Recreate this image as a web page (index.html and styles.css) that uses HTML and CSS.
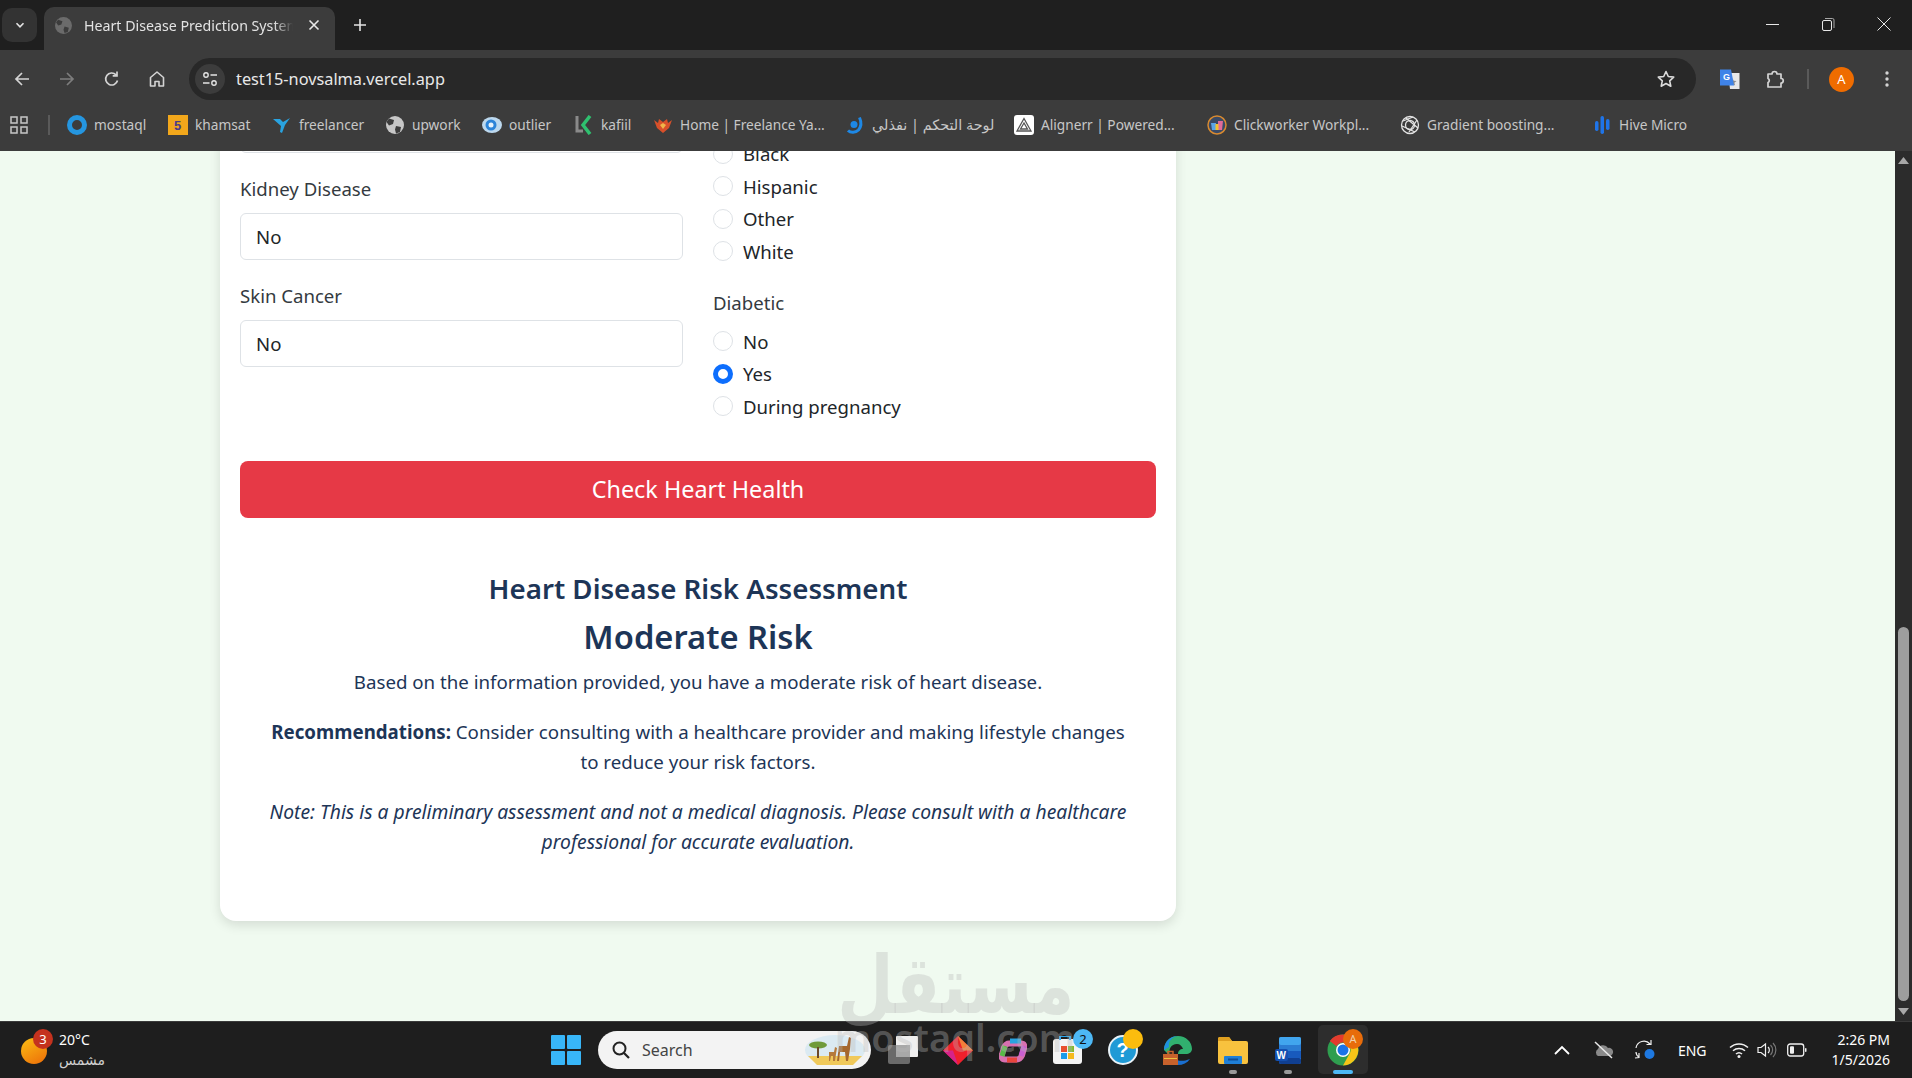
FILE: index.html
```html
<!DOCTYPE html>
<html lang="en">

<head>
    <meta charset="UTF-8">
    <title>Heart Disease Prediction System</title>
    <link rel="stylesheet" href="styles.css">
</head>

<body>
    <div class="screen">

        <!-- browser chrome -->
        <div class="tabstrip">
            <div class="tab-search">
                <svg width="12" height="12" viewBox="0 0 12 12"><path d="M2.5 4.2 6 7.8l3.5-3.6" fill="none" stroke="#e3e3e3" stroke-width="1.6"/></svg>
            </div>
            <div class="tab">
                <svg class="tab-globe" width="17" height="17" viewBox="0 0 16 16"><circle cx="8" cy="8" r="8" fill="#6b6b6b"/><path d="M3 2.5 7 4 6 7 3 8 1 5zM9 9l4 1-1 4-3 1-1-3z" fill="#3c3c3c"/></svg>
                <span class="tab-title">Heart Disease Prediction System</span>
                <svg class="tab-close" width="12" height="12" viewBox="0 0 12 12"><path d="M1.5 1.5l9 9M10.5 1.5l-9 9" stroke="#e8e8e8" stroke-width="1.6"/></svg>
            </div>
            <svg class="tab-new" width="14" height="14" viewBox="0 0 14 14"><path d="M7 1v12M1 7h12" stroke="#e3e3e3" stroke-width="1.6"/></svg>
            <div class="win-buttons">
                <svg width="14" height="14" viewBox="0 0 14 14"><path d="M1 7.5h13" stroke="#e8e8e8" stroke-width="1"/></svg>
                <svg width="14" height="14" viewBox="0 0 14 14"><rect x="1.5" y="3.5" width="9" height="10" rx="1.5" fill="none" stroke="#e8e8e8"/><path d="M4 1.5h7.5a1.5 1.5 0 0 1 1.5 1.5v8" fill="none" stroke="#a8a8a8"/></svg>
                <svg width="14" height="14" viewBox="0 0 14 14"><path d="M.5.5l13 13M13.500.5l-13 13" stroke="#e8e8e8" stroke-width="1"/></svg>
            </div>
        </div>

        <div class="toolbar">
            <svg class="nav-icon" width="18" height="18" viewBox="0 0 18 18"><path d="M16 9H3M9 3 3 9l6 6" fill="none" stroke="#d4d4d4" stroke-width="1.7"/></svg>
            <svg class="nav-icon" width="18" height="18" viewBox="0 0 18 18"><path d="M2 9h13M9 3l6 6-6 6" fill="none" stroke="#7d7d7d" stroke-width="1.7"/></svg>
            <svg class="nav-icon" width="18" height="18" viewBox="0 0 18 18"><path d="M14.5 10.500A6 6 0 1 1 13 4.800M14 1.500v4.300H9.700" fill="none" stroke="#d4d4d4" stroke-width="1.7"/></svg>
            <svg class="nav-icon" width="18" height="18" viewBox="0 0 18 18"><path d="M9 2 2.500 7.500V16H7v-4.500h4V16h4.500V7.500z" fill="none" stroke="#d4d4d4" stroke-width="1.6" stroke-linejoin="round"/></svg>
            <div class="omnibox">
                <div class="site-info">
                    <svg width="16" height="16" viewBox="0 0 16 16"><circle cx="4" cy="4" r="2.200" fill="none" stroke="#e3e3e3" stroke-width="1.4"/><path d="M8.500 4H15M1 12h6.500" stroke="#e3e3e3" stroke-width="1.4"/><circle cx="12" cy="12" r="2.200" fill="none" stroke="#e3e3e3" stroke-width="1.4"/></svg>
                </div>
                <span class="url">test15-novsalma.vercel.app</span>
                <svg class="star" width="20" height="20" viewBox="0 0 20 20"><path d="m10 2.500 2.300 5 5.400.6-4 3.700 1.100 5.400L10 14.500l-4.800 2.700 1.100-5.400-4-3.700 5.400-.6z" fill="none" stroke="#dcdcdc" stroke-width="1.6" stroke-linejoin="round"/></svg>
            </div>
            <svg class="ext-translate" width="22" height="22" viewBox="0 0 22 22"><path d="M9 5h11.500v16H11z" fill="#e8e8e8"/><path d="m13.500 10 1.200 2.700 2.800.2-2.100 1.900.7 2.800-2.600-1.500z" fill="#8b8b8b"/><path d="M1 1.500h11l3 16H1z" fill="#3f83e8"/><text x="4" y="12" class="ext-g">G</text></svg>
            <svg class="ext-puzzle" width="20" height="20" viewBox="0 0 20 20"><path d="M3 5h4a2.500 2.500 0 0 1 5 0h4v4.500a2.200 2.200 0 0 1 0 4.500V18H3v-4.500a2.200 2.200 0 0 0 0-4z" fill="none" stroke="#d4d4d4" stroke-width="1.7" stroke-linejoin="round"/></svg>
            <div class="toolbar-sep"></div>
            <div class="avatar">A</div>
            <svg class="kebab" width="4" height="18" viewBox="0 0 4 18"><circle cx="2" cy="3" r="1.700" fill="#d4d4d4"/><circle cx="2" cy="9" r="1.700" fill="#d4d4d4"/><circle cx="2" cy="15" r="1.700" fill="#d4d4d4"/></svg>
        </div>

        <div class="bookmarks">
            <svg class="apps" width="18" height="18" viewBox="0 0 18 18"><g fill="none" stroke="#c7c7c7" stroke-width="1.5"><rect x="1" y="1" width="6" height="6"/><rect x="11" y="1" width="6" height="6"/><rect x="1" y="11" width="6" height="6"/><rect x="11" y="11" width="6" height="6"/></g></svg>
            <div class="bm-sep"></div>
            <div class="bm bm-mostaql"><svg width="20" height="20" viewBox="0 0 20 20"><circle cx="10" cy="10" r="7.500" fill="none" stroke="#2596e0" stroke-width="5"/></svg><span>mostaql</span></div>
            <div class="bm bm-khamsat"><svg width="20" height="20" viewBox="0 0 20 20"><rect width="20" height="20" fill="#f2a71b"/><text x="6" y="15" class="bm-five">5</text></svg><span>khamsat</span></div>
            <div class="bm bm-freelancer"><svg width="20" height="20" viewBox="0 0 20 20"><path d="M1 4h7l3 3 7-4-5 7-3 8-2-1 1-6z" fill="#29a3e0"/></svg><span>freelancer</span></div>
            <div class="bm bm-upwork"><svg width="20" height="20" viewBox="0 0 20 20"><circle cx="10" cy="10" r="9" fill="#c7c7c7"/><path d="M4 3.500 9 5 8 9 4 10.500 1.500 7zM11 11l5 1-1 5-4 1.500-1-4z" fill="#3c3c3c"/></svg><span>upwork</span></div>
            <div class="bm bm-outlier"><svg width="20" height="20" viewBox="0 0 20 20"><ellipse cx="10" cy="10" rx="10" ry="8" fill="#bcd8ee"/><circle cx="9" cy="10" r="5.500" fill="#2c84d8"/><circle cx="9" cy="10" r="2.500" fill="#e6f2fb"/></svg><span>outlier</span></div>
            <div class="bm bm-kafiil"><svg width="20" height="20" viewBox="0 0 20 20"><path d="M3 1v15h6" fill="none" stroke="#8a8a8a" stroke-width="3"/><path d="M16 1 9 10l7 9" fill="none" stroke="#2fc06f" stroke-width="3.5"/></svg><span>kafiil</span></div>
            <div class="bm bm-home"><svg width="20" height="20" viewBox="0 0 20 20"><path d="M10 18 4 13 1 5l4 3 1-4 4 3 4-3 1 4 4-3-3 8z" fill="#d8502a"/><path d="M10 14 7 10l3-2 3 2z" fill="#f0b64a"/></svg><span>Home | Freelance Ya...</span></div>
            <div class="bm bm-nafthly"><svg width="20" height="20" viewBox="0 0 20 20"><path d="M14.500 2.500c1.800 4 1.800 9-1 12.500-3 3-8 3-10.500.5" fill="none" stroke="#1e88e5" stroke-width="3"/><circle cx="9" cy="9.500" r="3.500" fill="#1e88e5"/></svg><span dir="rtl">لوحة التحكم | نفذلي</span></div>
            <div class="bm bm-alignerr"><svg width="20" height="20" viewBox="0 0 20 20"><rect width="20" height="20" rx="3" fill="#fff"/><path d="M10 3.500 3 16h14zM10 8l-3.500 6h7z" fill="none" stroke="#555" stroke-width="1.3"/></svg><span>Alignerr | Powered...</span></div>
            <div class="bm bm-clickworker"><svg width="20" height="20" viewBox="0 0 20 20"><circle cx="10" cy="10" r="9" fill="#3a4a66" stroke="#d88a30" stroke-width="1.5"/><path d="M4 8h5v7H5z" fill="#5aa5e6"/><path d="M11 6h5l-1 9h-4z" fill="#e06a9a"/><rect x="8.500" y="9" width="3" height="6" fill="#f2c230"/></svg><span>Clickworker Workpl...</span></div>
            <div class="bm bm-gradient"><svg width="20" height="20" viewBox="0 0 20 20"><g fill="none" stroke="#e3e3e3" stroke-width="1.300"><circle cx="10" cy="10" r="8.500"/><circle cx="10" cy="10" r="4.500"/><path d="M3 6l10-4M17 5 9 17M18 13 6 3M2 11l13 6"/></g></svg><span>Gradient boosting...</span></div>
            <div class="bm bm-hive"><svg width="20" height="20" viewBox="0 0 20 20"><g fill="#1f74e8"><rect x="3" y="6" width="3.500" height="10" rx="1.700"/><rect x="8.500" y="1" width="3.500" height="18" rx="1.700"/><rect x="14" y="4" width="3.500" height="11" rx="1.700"/></g></svg><span>Hive Micro</span></div>
        </div>

        <!-- page, scrolled to the result -->
        <div class="viewport">
            <div class="page">
                <div class="card">
                    <div class="form-grid">
                        <div class="col">
                            <div class="field">
                                <div class="select"></div>
                            </div>
                            <div class="field">
                                <label>Kidney Disease</label>
                                <div class="select">No</div>
                            </div>
                            <div class="field">
                                <label>Skin Cancer</label>
                                <div class="select">No</div>
                            </div>
                        </div>
                        <div class="col col-radios">
                            <div class="radio-group">
                                <div class="radio"><i></i><span>Black</span></div>
                                <div class="radio"><i></i><span>Hispanic</span></div>
                                <div class="radio"><i></i><span>Other</span></div>
                                <div class="radio"><i></i><span>White</span></div>
                            </div>
                            <div class="radio-group">
                                <label class="group-label">Diabetic</label>
                                <div class="radio"><i></i><span>No</span></div>
                                <div class="radio"><i class="checked"></i><span>Yes</span></div>
                                <div class="radio"><i></i><span>During pregnancy</span></div>
                            </div>
                        </div>
                    </div>

                    <button class="submit">Check Heart Health</button>

                    <div class="result">
                        <h3>Heart Disease Risk Assessment</h3>
                        <h2>Moderate Risk</h2>
                        <p>Based on the information provided, you have a moderate risk of heart disease.</p>
                        <p><strong>Recommendations:</strong> Consider consulting with a healthcare provider and making lifestyle changes to reduce your risk factors.</p>
                        <p class="note">Note: This is a preliminary assessment and not a medical diagnosis. Please consult with a healthcare professional for accurate evaluation.</p>
                    </div>
                </div>
            </div>
            <div class="scrollbar">
                <svg width="17" height="18" viewBox="0 0 17 18"><path d="M3 13 8.500 6l5.500 7z" fill="#a8a8a8"/></svg>
                <div class="scroll-track"><div class="scroll-thumb"></div></div>
                <svg width="17" height="18" viewBox="0 0 17 18"><path d="M3 5h11l-5.500 7z" fill="#a8a8a8"/></svg>
            </div>
        </div>

        <!-- windows taskbar -->
        <div class="taskbar">
            <div class="weather">
                <div class="sun"><b>3</b></div>
                <div class="weather-text">
                    <span>20°C</span>
                    <span class="weather-sub">مشمس</span>
                </div>
            </div>
            <div class="task-center">
                <svg class="start" width="30" height="30" viewBox="0 0 30 30"><g fill="#38b6f8"><rect x="0" y="0" width="14" height="14" rx="1"/><rect x="16" y="0" width="14" height="14" rx="1"/><rect x="0" y="16" width="14" height="14" rx="1"/><rect x="16" y="16" width="14" height="14" rx="1"/></g></svg>
                <div class="search">
                    <svg width="20" height="20" viewBox="0 0 20 20"><circle cx="8.500" cy="8.500" r="6" fill="none" stroke="#222" stroke-width="2"/><path d="m13 13 5 5" stroke="#222" stroke-width="2.200"/></svg>
                    <span>Search</span>
                    <svg class="search-art" width="60" height="30" viewBox="0 0 60 30"><ellipse cx="30" cy="15" rx="30" ry="15" fill="#dbeaf2"/><path d="M3 21h54l-9 9H12z" fill="#f0c95a"/><ellipse cx="13" cy="10" rx="9" ry="3.500" fill="#6f9a3a"/><path d="M12 12h2v11h-2z" fill="#6b4a2a"/><path d="M34 11h8l2-9 2 1-1 11-2 12h-2l-1-9h-5l-1 9h-2z" fill="#a5682f"/><path d="M24 17h5l1-5 2 1-1 6-1 7h-2v-5h-2l-1 5h-1z" fill="#b57a3c"/></svg>
                </div>
                <div class="slot slot-first">
                    <svg width="30" height="28" viewBox="0 0 30 28"><rect x="8" y="0" width="22" height="21" rx="1" fill="#efefef"/><rect x="0" y="9" width="22" height="19" rx="2" fill="#6a6a6a"/><rect x="8" y="9" width="14" height="12" fill="#a8a8a8"/></svg>
                </div>
                <div class="slot">
                    <svg width="30" height="29" viewBox="0 0 30 29"><path d="M15 0 30 14.500 15 29 0 14.500z" fill="#f0202c"/><path d="M15 0 30 14.500H20z" fill="#f2803a"/><path d="M0 14.500h10L15 29z" fill="#d6238a"/></svg>
                </div>
                <div class="slot">
                    <svg width="28" height="25" viewBox="0 0 28 25"><path d="M10 5.500h12c3 0 4 2 3 5l-2 7c-1 2-2 4-5 4H6c-3 0-4-2-3-5l2-7c1-2 2-4 5-4z" fill="none" stroke="#d870b0" stroke-width="6"/><path d="M6 8 3 18" stroke="#58b848" stroke-width="5"/><path d="M25 8l-3 10" stroke="#c85fd0" stroke-width="5"/><path d="M8 22h10" stroke="#e8453c" stroke-width="5"/><path d="M11 3h11" stroke="#29a3e0" stroke-width="5"/></svg>
                </div>
                <div class="slot">
                    <svg width="29" height="28" viewBox="0 0 29 28"><rect x="0" y="3" width="29" height="25" rx="3" fill="#f4f4f4"/><path d="M7 4V0h10v4" fill="none" stroke="#2aa7ee" stroke-width="2"/><rect x="8" y="10" width="6" height="6" fill="#e8502f"/><rect x="15" y="10" width="6" height="6" fill="#7db92f"/><rect x="8" y="17" width="6" height="6" fill="#1e9ce8"/><rect x="15" y="17" width="6" height="6" fill="#f5b91c"/></svg>
                    <b class="store-badge">2</b>
                </div>
                <div class="slot">
                    <div class="help-circle">?</div>
                    <i class="help-dot"></i>
                </div>
                <div class="slot">
                    <svg width="30" height="30" viewBox="0 0 30 30"><path d="M1 15C1 7 7 1 15 1c8 0 14 6 14 13 0 3-3 5-6 5h-8c0-3 2-5 5-5-1-3-3-5-6-5-6 0-9 5-7 12z" fill="#31b06f"/><path d="M1 15C1 7 7 1 15 1c-6 1-10 5-9 11z" fill="#1f8fe0"/><path d="M8 19c2 6 9 9 19 5-3 4-7 6-12 6-4 0-7-1-9-3z" fill="#1a6fd0"/><rect x="0" y="19" width="15" height="11" fill="#c8622c"/><rect x="5" y="16.500" width="5" height="3" fill="none" stroke="#c8622c" stroke-width="1.500"/><rect x="1" y="23" width="13" height="1" fill="#f0c040"/></svg>
                </div>
                <div class="slot">
                    <svg width="30" height="28" viewBox="0 0 30 28"><path d="M0 3a2 2 0 0 1 2-2h9l3 4h14a2 2 0 0 1 2 2v19a2 2 0 0 1-2 2H2a2 2 0 0 1-2-2z" fill="#f8c23e"/><path d="M0 3a2 2 0 0 1 2-2h9l3 4H0z" fill="#e0a020"/><rect x="6" y="20" width="18" height="8" rx="1" fill="#1f7fd6"/><rect x="10" y="22.500" width="10" height="2" fill="#0f4f96"/></svg>
                    <span class="run-dot"></span>
                </div>
                <div class="slot">
                    <svg width="26" height="27" viewBox="0 0 26 27"><rect x="4" y="0" width="22" height="27" rx="2" fill="#2b7cd3"/><rect x="4" y="0" width="22" height="8" rx="2" fill="#41a5ee"/><rect x="4" y="14" width="22" height="7" fill="#185abd"/><rect x="4" y="21" width="22" height="6" rx="2" fill="#103f91"/><rect x="0" y="12" width="13" height="12" rx="2" fill="#1450b0"/><text x="1.500" y="21.500" class="word-w">W</text></svg>
                    <span class="run-dot"></span>
                </div>
                <div class="slot slot-chrome">
                    <svg width="32" height="32" viewBox="0 0 32 32"><circle cx="16" cy="16" r="15.500" fill="#2f9e4f"/><path d="M16 .5A15.500 15.500 0 0 1 29.400 8.500H16a7.500 7.500 0 0 0-6.500 3.700L2.800 7A15.500 15.500 0 0 1 16 .5z" fill="#e33b2e"/><path d="M29.400 8.500A15.500 15.500 0 0 1 16 31.500l6.500-11.700A7.500 7.500 0 0 0 22.500 12z" fill="#f5c518"/><circle cx="16" cy="16" r="7" fill="#fff"/><circle cx="16" cy="16" r="5.500" fill="#1a73e8"/></svg>
                    <b class="chrome-badge">A</b>
                    <span class="active-bar"></span>
                </div>
            </div>
            <div class="tray">
                <svg width="16" height="10" viewBox="0 0 16 10"><path d="M1 9l7-7 7 7" fill="none" stroke="#fff" stroke-width="1.8"/></svg>
                <svg class="tray-cloud" width="20" height="18" viewBox="0 0 20 18"><path d="M4 15a4 4 0 0 1 0-7 5.500 5.500 0 0 1 10-1 4 4 0 0 1 2 8z" fill="#8a8a8a"/><path d="M1 1l17 16" stroke="#e8e8e8" stroke-width="1.5"/></svg>
                <svg class="tray-sync" width="22" height="22" viewBox="0 0 22 22"><path d="M2 9a8 8 0 0 1 14-4M17 1v4.500h-4.500M1 19l4-.5V14M5 18a6 6 0 0 1-3-5" fill="none" stroke="#f0f0f0" stroke-width="1.2"/><circle cx="15.500" cy="15" r="5" fill="#1e78e0"/></svg>
                <span class="lang">ENG</span>
                <svg class="tray-wifi" width="20" height="16" viewBox="0 0 20 16"><path d="M1 5.500a13 13 0 0 1 18 0M4 8.800a9 9 0 0 1 12 0M7 12a4.500 4.500 0 0 1 6 0" fill="none" stroke="#f0f0f0" stroke-width="1.5"/><circle cx="10" cy="14.500" r="1.500" fill="#f0f0f0"/></svg>
                <svg class="tray-sound" width="20" height="16" viewBox="0 0 20 16"><path d="M1 5.500h3L8.500 2v12L4 10.500H1z" fill="none" stroke="#f0f0f0" stroke-width="1.2"/><path d="M11 5a4 4 0 0 1 0 6" fill="none" stroke="#f0f0f0" stroke-width="1.2"/><path d="M13.500 3a7 7 0 0 1 0 10M16 1a10 10 0 0 1 0 14" fill="none" stroke="#777" stroke-width="1.2"/></svg>
                <svg class="tray-battery" width="20" height="14" viewBox="0 0 20 14"><rect x=".7" y="1" width="16" height="12" rx="2.500" fill="none" stroke="#f0f0f0" stroke-width="1.3"/><rect x="3" y="3.300" width="4" height="7.400" rx="1" fill="#f0f0f0"/><rect x="18" y="5" width="1.500" height="4" rx=".7" fill="#f0f0f0"/></svg>
                <div class="clock">
                    <span>2:26 PM</span>
                    <span>1/5/2026</span>
                </div>
            </div>
        </div>

        <!-- watermark over the picture -->
        <div class="watermark">
            <div class="wm-ar" dir="rtl">مستقل</div>
            <div class="wm-en">mostaql.com</div>
        </div>
    </div>
</body>

</html>
```

FILE: styles.css
```css
* {
    margin: 0;
    padding: 0;
    box-sizing: border-box;
}

html,
body {
    height: 100%;
    overflow: hidden;
}

body {
    font-family: "Noto Sans", "DejaVu Sans", sans-serif;
}

.screen {
    position: relative;
    width: 1912px;
    height: 1078px;
    display: flex;
    flex-direction: column;
    overflow: hidden;
}

/* tab strip */
.tabstrip {
    height: 50px;
    background-color: #1f1f1f;
    display: flex;
    align-items: flex-end;
    padding-left: 2px;
    flex: none;
}

.tab-search {
    width: 35px;
    height: 34px;
    margin-bottom: 8px;
    background-color: #333;
    border-radius: 10px;
    display: flex;
    align-items: center;
    justify-content: center;
}

.tab {
    width: 291px;
    height: 43px;
    margin-left: 7px;
    padding: 0 11px 7px;
    background-color: #3c3c3c;
    border-radius: 10px 10px 0 0;
    display: flex;
    align-items: center;
    color: #e3e3e3;
    font-size: 14.2px;
}

.tab-globe {
    flex: none;
}

.tab-title {
    width: 209px;
    margin-left: 12px;
    white-space: nowrap;
    overflow: hidden;
    flex: none;
    -webkit-mask-image: linear-gradient(to right, #000 190px, transparent 209px);
    mask-image: linear-gradient(to right, #000 190px, transparent 209px);
}

.tab-close {
    margin-left: 15px;
    flex: none;
}

.tab-new {
    margin: 0 0 18px 18px;
}

.win-buttons {
    margin-left: auto;
    width: 147px;
    height: 50px;
    padding: 17px 21px 0 0;
    display: flex;
    justify-content: space-between;
    align-items: flex-start;
}

/* toolbar */
.toolbar {
    height: 58px;
    background-color: #3c3c3c;
    display: flex;
    align-items: center;
    padding: 0 0 0 13px;
    flex: none;
}

.nav-icon {
    margin-right: 27px;
    flex: none;
}

.nav-icon:nth-child(4) {
    margin-right: 23px;
}

.omnibox {
    width: 1507px;
    height: 42px;
    background-color: #282828;
    border-radius: 21px;
    display: flex;
    align-items: center;
    padding-left: 6px;
    padding-right: 20px;
}

.site-info {
    width: 30px;
    height: 30px;
    background-color: #3c3c3c;
    border-radius: 50%;
    display: flex;
    align-items: center;
    justify-content: center;
}

.url {
    margin-left: 11px;
    color: #e8e8e8;
    font-size: 16.3px;
}

.star {
    margin-left: auto;
}

.ext-translate {
    margin-left: 23px;
}

.ext-g {
    font: bold 9px "Liberation Sans", sans-serif;
    fill: #fff;
}

.ext-puzzle {
    margin-left: 24px;
}

.toolbar-sep {
    width: 2px;
    height: 20px;
    background-color: #5a5a5a;
    margin-left: 22px;
}

.avatar {
    width: 25px;
    height: 25px;
    margin-left: 20px;
    border-radius: 50%;
    background-color: #ef6c00;
    color: #fff;
    font-size: 13px;
    display: flex;
    align-items: center;
    justify-content: center;
}

.kebab {
    margin-left: 31px;
}

/* bookmarks */
.bookmarks {
    height: 43px;
    padding: 0 0 10px 10px;
    background-color: #3c3c3c;
    display: flex;
    align-items: center;
    color: #c7c7c7;
    font-size: 13.7px;
    flex: none;
}

.bm-sep {
    width: 2px;
    height: 20px;
    background-color: #5a5a5a;
    margin-left: 20px;
    margin-right: 17px;
}

.bm {
    display: flex;
    align-items: center;
    gap: 7px;
    white-space: nowrap;
    flex: none;
}

.bm svg {
    flex: none;
}

.bm-mostaql { width: 101px; }
.bm-khamsat { width: 104px; }
.bm-freelancer { width: 113px; }
.bm-upwork { width: 97px; }
.bm-outlier { width: 92px; }
.bm-kafiil { width: 79px; }
.bm-home { width: 192px; }
.bm-nafthly { width: 169px; }
.bm-alignerr { width: 193px; }
.bm-clickworker { width: 193px; }
.bm-gradient { width: 192px; }

.bm-nafthly span {
    font-size: 14.4px;
}

.bm-five {
    font: bold 13px "Liberation Sans", sans-serif;
    fill: #4a3a8a;
}

/* page */
.viewport {
    flex: 1;
    min-height: 0;
    display: flex;
    background-color: #f0faf0;
}

.page {
    flex: 1;
    min-width: 0;
    overflow: hidden;
    padding-left: 220px;
}

.card {
    width: 956px;
    margin-top: -65px;
    padding: 20px 20px 64px;
    background-color: #fff;
    border-radius: 16px;
    box-shadow: 0 4px 12px rgba(0, 0, 0, 0.12);
    color: #212529;
}

.form-grid {
    display: flex;
    gap: 30px;
}

.col {
    flex: 1;
    min-width: 0;
}

.col-radios {
    padding-top: 31.5px;
}

.field {
    margin-bottom: 21px;
}

.field label,
.group-label {
    display: block;
    height: 30px;
    line-height: 30px;
    margin-bottom: 9px;
    color: #343a40;
    font-size: 18.6px;
}

.group-label {
    margin-bottom: 7.5px;
}

.select {
    height: 47px;
    line-height: 45px;
    padding-left: 15px;
    border: 1px solid #dee2e6;
    border-radius: 6px;
    font-size: 18.6px;
}

.radio-group {
    margin-bottom: 20px;
}

.radio-group:last-child {
    margin-bottom: 0;
}

.radio {
    height: 32.5px;
    display: flex;
    align-items: center;
    gap: 10px;
    font-size: 18.6px;
}

.radio i {
    width: 20px;
    height: 20px;
    border-radius: 50%;
    border: 1px solid #dee2e6;
    flex: none;
}

.radio i.checked {
    border: 5.5px solid #0d6efd;
}

.submit {
    display: block;
    width: 100%;
    height: 57px;
    margin-top: 38px;
    background-color: #e63946;
    border: none;
    border-radius: 8px;
    color: #fff;
    font-family: inherit;
    font-size: 23.4px;
}

.result {
    margin-top: 53px;
    text-align: center;
    color: #1d3557;
}

.result h3 {
    font-size: 27.7px;
    font-weight: 600;
    line-height: 34px;
    margin-bottom: 12px;
}

.result h2 {
    font-size: 32.7px;
    font-weight: 600;
    line-height: 40px;
    margin-bottom: 10px;
}

.result p {
    padding: 0 22px;
    font-size: 18.7px;
    line-height: 30px;
    margin-bottom: 20px;
}

.result p.note {
    font-size: 19.3px;
    font-style: italic;
    margin-bottom: 0;
}

/* scrollbar */
.scrollbar {
    width: 17px;
    background-color: #2c2c2c;
    display: flex;
    flex-direction: column;
    flex: none;
}

.scroll-track {
    flex: 1;
    position: relative;
}

.scroll-thumb {
    position: absolute;
    left: 3px;
    right: 3px;
    bottom: 2px;
    height: 374px;
    background-color: #9e9e9e;
    border-radius: 6px;
}

/* taskbar */
.taskbar {
    height: 57px;
    background-color: #1e1e1e;
    border-top: 1px solid #3a3a3a;
    display: flex;
    align-items: center;
    flex: none;
    color: #fff;
}

.weather {
    display: flex;
    align-items: center;
    margin-left: 21px;
    width: 530px;
}

.sun {
    position: relative;
    width: 26px;
    height: 26px;
    border-radius: 50%;
    background: linear-gradient(150deg, #fbbf14, #ec6c08);
    margin-top: 2px;
}

.sun b {
    position: absolute;
    top: -9px;
    left: 12px;
    width: 20px;
    height: 20px;
    border-radius: 50%;
    background-color: #c4321e;
    font-size: 13px;
    font-weight: 400;
    line-height: 20px;
    text-align: center;
}

.weather-text {
    display: flex;
    flex-direction: column;
    margin-left: 12px;
    font-size: 14px;
    line-height: 21px;
    margin-top: -1px;
}

.weather-sub {
    font-family: "DejaVu Sans", sans-serif;
    font-size: 14px;
    color: #d0d0d0;
}

.task-center {
    display: flex;
    align-items: center;
}

.start {
    flex: none;
}

.search {
    width: 273px;
    height: 38px;
    margin-left: 17px;
    border-radius: 19px;
    background-color: #f3f3f3;
    display: flex;
    align-items: center;
    padding-left: 13px;
    padding-right: 6px;
    color: #444;
    font-size: 16px;
}

.search span {
    margin-left: 11px;
}

.search-art {
    margin-left: auto;
}

.slot {
    position: relative;
    width: 55px;
    height: 52px;
    display: flex;
    align-items: center;
    justify-content: center;
    flex: none;
}

.slot-first {
    margin-left: 4px;
}

.store-badge {
    position: absolute;
    top: 5px;
    left: 33px;
    width: 20px;
    height: 20px;
    border-radius: 50%;
    background-color: #4db8f5;
    color: #111;
    font-size: 13px;
    font-weight: 400;
    line-height: 20px;
    text-align: center;
}

.help-circle {
    width: 30px;
    height: 30px;
    border-radius: 50%;
    border: 2px solid #e8f2f8;
    background-color: #1f9ad6;
    color: #fff;
    font: bold 20px/26px "Liberation Sans", sans-serif;
    text-align: center;
}

.help-dot {
    position: absolute;
    top: 5px;
    left: 28px;
    width: 20px;
    height: 20px;
    border-radius: 50%;
    background-color: #fbbc0e;
}

.word-w {
    font: bold 10px "Liberation Sans", sans-serif;
    fill: #fff;
}

.run-dot {
    position: absolute;
    bottom: 2px;
    left: 23.5px;
    width: 8px;
    height: 4px;
    border-radius: 2px;
    background-color: #9a9a9a;
}

.slot-chrome::before {
    content: "";
    position: absolute;
    top: 1px;
    bottom: 2px;
    left: 2.5px;
    right: 2.5px;
    background-color: #2d2d2d;
    border-radius: 5px;
}

.slot-chrome svg {
    position: relative;
}

.chrome-badge {
    position: absolute;
    top: 5px;
    left: 28px;
    width: 20px;
    height: 20px;
    border-radius: 50%;
    background-color: #e86c0a;
    color: #f0d0a8;
    font-size: 11px;
    font-weight: 400;
    line-height: 20px;
    text-align: center;
}

.active-bar {
    position: absolute;
    bottom: 2px;
    left: 17.5px;
    width: 20px;
    height: 4px;
    border-radius: 2px;
    background-color: #4db8f5;
}

.tray {
    margin-left: auto;
    display: flex;
    align-items: center;
    padding-right: 22px;
    font-size: 14px;
}

.tray-cloud { margin-left: 24px; }
.tray-sync { margin-left: 20px; }
.lang { margin-left: 22px; }
.tray-wifi { margin-left: 22px; }
.tray-sound { margin-left: 8px; }
.tray-battery { margin-left: 10px; }

.clock {
    margin-left: 25px;
    display: flex;
    flex-direction: column;
    align-items: flex-end;
    line-height: 20px;
}

/* watermark */
.watermark {
    position: absolute;
    left: 828px;
    top: 940px;
    width: 254px;
    text-align: center;
    color: rgba(185, 185, 185, 0.36);
    pointer-events: none;
}

.wm-ar {
    font-family: "DejaVu Sans", sans-serif;
    font-size: 72px;
    font-weight: 700;
    line-height: 90px;
    transform: translateX(5px) scale(0.9, 1.12);
}

.wm-en {
    margin-top: -10px;
    font-size: 38px;
    font-weight: 600;
    line-height: 34px;
}
```
